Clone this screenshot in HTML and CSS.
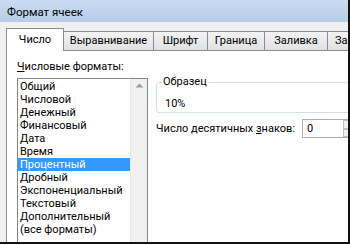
FILE: index.html
```html
<!DOCTYPE html>
<html>
<head>
<meta charset="utf-8">
<link rel="stylesheet" href="styles.css">
</head>
<body>
<div class="frame">
  <div class="titlebar">Формат ячеек</div>
  <div class="tabs">
    <div class="tab active w1">Число</div>
    <div class="tab w2">Выравнивание</div>
    <div class="tab w3">Шрифт</div>
    <div class="tab w4">Граница</div>
    <div class="tab w5">Заливка</div>
    <div class="tab w6">Защита</div>
  </div>
  <div class="panel">
    <div class="leftcol">
      <div class="label"><u>Ч</u>исловые форматы:</div>
      <div class="listbox">
        <ul class="items">
          <li>Общий</li>
          <li>Числовой</li>
          <li>Денежный</li>
          <li>Финансовый</li>
          <li>Дата</li>
          <li>Время</li>
          <li class="sel">Процентный</li>
          <li>Дробный</li>
          <li>Экспоненциальный</li>
          <li>Текстовый</li>
          <li>Дополнительный</li>
          <li>(все форматы)</li>
        </ul>
        <div class="scrollbar">
          <svg class="arrow" width="9" height="5" viewBox="0 0 9 5"><path d="M0.5 4.5 L4.5 0.5 L8.5 4.5 Z" fill="#a0a0a0"/></svg>
        </div>
      </div>
    </div>
    <div class="rightcol">
      <fieldset class="sample">
        <legend>Образец</legend>
        <div class="sampleval">10%</div>
      </fieldset>
      <div class="decrow">
        <span class="declabel">Число десятичных <u>з</u>наков:</span>
        <div class="spin">
          <span class="spinval">0</span>
          <div class="spinbtns"><div class="sb"></div><div class="sb"></div></div>
        </div>
      </div>
    </div>
  </div>
</div>
</body>
</html>
```
FILE: styles.css
```css
html, body {
  margin: 0;
  padding: 0;
}
body {
  width: 350px;
  height: 244px;
  overflow: hidden;
  font-family: Roboto, "Liberation Sans", Arial, sans-serif;
  font-size: 11px;
  color: #000;
}
.frame {
  box-sizing: border-box;
  width: 350px;
  height: 244px;
  overflow: hidden;
  background: #f0f0f0;
  border-right: 2px solid #111;
  border-bottom: 2px solid #111;
  display: flex;
  flex-direction: column;
}
.titlebar {
  height: 22px;
  flex: none;
  line-height: 24px;
  padding-left: 7px;
  font-size: 11.5px;
  background: linear-gradient(#cadbf0, #b6cde9);
  color: #000;
}
.tabs {
  display: flex;
  align-items: flex-end;
  height: 28px;
  padding-left: 6px;
  flex: none;
  position: relative;
  z-index: 1;
}
.tab {
  box-sizing: border-box;
  height: 19px;
  line-height: 17px;
  text-align: center;
  border: 1px solid #898c95;
  border-bottom: none;
  border-left: none;
  background: linear-gradient(#f3f3f3, #e1e1e1);
  white-space: nowrap;
  overflow: hidden;
  flex: none;
}
.tab.active {
  border-left: 1px solid #898c95;
  background: #fff;
  line-height: 21px;
  margin-bottom: -1px;
  height: 23px;
}
.w1 { width: 58px; }
.w2 { width: 90px; }
.w3 { width: 54px; }
.w4 { width: 57px; }
.w5 { width: 63px; }
.w6 { width: 40px; text-align: left; padding-left: 7px; }
.panel {
  flex: 1;
  margin-left: 6px;
  background: #fff;
  border-left: 1px solid #898c95;
  border-top: 1px solid #898c95;
  display: flex;
  padding: 8px 0 0 10px;
  min-height: 0;
}
.leftcol {
  width: 131px;
  flex: none;
  display: flex;
  flex-direction: column;
}
.label {
  height: 15px;
  line-height: 15px;
  white-space: nowrap;
}
.label u, .declabel u {
  text-decoration: underline;
  text-underline-offset: 1px;
}
.listbox {
  margin-top: 4px;
  flex: 1;
  border: 1px solid #828790;
  border-bottom: none;
  display: flex;
}
.items {
  list-style: none;
  margin: 0;
  padding: 1px 0 0 0;
  flex: 1;
}
.items li {
  height: 13px;
  line-height: 13px;
  padding-left: 2px;
  white-space: nowrap;
}
.items li.sel {
  background: #3399ff;
  color: #fff;
}
.scrollbar {
  width: 17px;
  flex: none;
  background: #f0f0f0;
  border-left: 1px solid #e6e6e6;
  display: flex;
  justify-content: center;
  padding-top: 4px;
  box-sizing: border-box;
}
.arrow { display: block; }
.rightcol {
  margin-left: 8px;
  width: 220px;
  flex: none;
}
.sample {
  margin: 17px 0 0 0;
  padding: 0 0 3px 7px;
  border: 1px solid #d5dfe5;
  border-radius: 3px;
  height: 37px;
  box-sizing: border-box;
}
.sample legend {
  padding: 0 1px;
  margin-left: -2px;
  line-height: 12px;
}
.sampleval {
  padding-left: 1px;
  line-height: 14px;
  margin-top: 9px;
}
.decrow {
  display: flex;
  align-items: center;
  margin-top: 6px;
}
.declabel {
  width: 146px;
  flex: none;
  white-space: nowrap;
}
.spin {
  box-sizing: border-box;
  width: 60px;
  height: 19px;
  border: 1px solid #abadb3;
  display: flex;
  align-items: center;
}
.spinval {
  padding-left: 4px;
  flex: none;
  width: 36px;
}
.spinbtns {
  display: flex;
  flex-direction: column;
  width: 10px;
  height: 17px;
}
.sb {
  flex: 1;
  border: 1px solid #c0c0c0;
  background: #f0f0f0;
}
```
